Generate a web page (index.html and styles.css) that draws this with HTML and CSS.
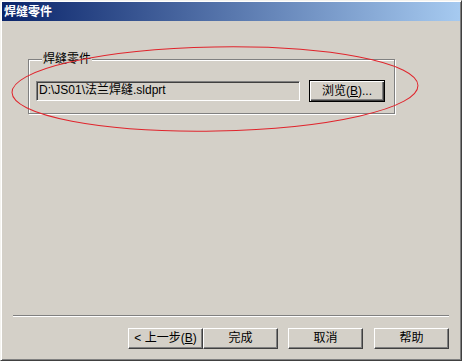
FILE: index.html
```html
<!DOCTYPE html>
<html lang="zh-CN">
<head>
<meta charset="utf-8">
<title>焊缝零件</title>
<link rel="stylesheet" href="styles.css">
</head>
<body>
<div class="window">
  <div class="titlebar"><span class="title">焊缝零件</span></div>
  <div class="content">
    <fieldset class="group">
      <legend class="legend">焊缝零件</legend>
      <div class="row">
        <div class="field">D:\JS01\法兰焊缝.sldprt</div>
        <button class="btn btn-default">浏览(<u>B</u>)...</button>
      </div>
    </fieldset>
  </div>
  <div class="footer">
    <div class="sep"></div>
    <div class="buttons">
      <div class="pair">
        <button class="btn">&lt; 上一步(<u>B</u>)</button>
        <button class="btn">完成</button>
      </div>
      <button class="btn">取消</button>
      <button class="btn btn-last">帮助</button>
    </div>
  </div>
  <svg class="annot" width="462" height="361" viewBox="0 0 462 361">
    <ellipse cx="215" cy="89" rx="203" ry="42" transform="rotate(-1 215 89)" fill="none" stroke="#e0242c" stroke-width="1"/>
  </svg>
</div>
</body>
</html>
```
FILE: styles.css
```css
* { box-sizing: border-box; }
html, body { margin: 0; padding: 0; background: #d4d0c8; }
body {
  font-family: "Liberation Sans", "Noto Sans CJK SC", sans-serif;
  font-size: 12px;
  color: #000;
}
.window {
  position: relative;
  width: 462px;
  height: 361px;
  background: #d4d0c8;
  border: 1px solid;
  border-color: #f4f3ef #404040 #404040 #f4f3ef;
  box-shadow: inset 1px 1px 0 #ffffff, inset -1px -1px 0 #808080;
  padding: 1px;
  display: flex;
  flex-direction: column;
}
.titlebar {
  height: 19px;
  background: linear-gradient(to right, #0a246a, #a6caf0);
  display: flex;
  align-items: center;
  padding-left: 2px;
}
.title {
  color: #fff;
  font-weight: bold;
  font-size: 12px;
  line-height: 14px;
  letter-spacing: 0;
}
.content {
  padding: 31px 65px 0 26px;
}
.group {
  margin: 0;
  padding: 14px 9px 11px 7px;
  border: 1px solid #808080;
  box-shadow: 1px 1px 0 #ffffff, inset 1px 1px 0 #ffffff;
  min-width: 0;
}
.legend {
  margin-left: 6px;
  padding: 0 1px;
  line-height: 14px;
  background: #d4d0c8;
}
.row {
  display: flex;
  align-items: center;
  gap: 9px;
}
.field {
  flex: 1;
  height: 20px;
  line-height: 16px;
  padding: 0 2px;
  background: #d4d0c8;
  border: 1px solid;
  border-color: #808080 #ffffff #ffffff #808080;
  box-shadow: inset 1px 1px 0 #404040, inset -1px -1px 0 #d4d0c8;
  white-space: nowrap;
  overflow: hidden;
}
.btn {
  font: inherit;
  color: #000;
  width: 75px;
  height: 21px;
  padding: 0;
  margin: 0;
  background: #d4d0c8;
  border: 1px solid;
  border-color: #ffffff #404040 #404040 #ffffff;
  box-shadow: inset -1px -1px 0 #808080;
  line-height: 17px;
  text-align: center;
}
.btn u { text-decoration: underline; }
.btn-default {
  width: 76px;
  height: 22px;
  border: 1px solid #000;
  box-shadow: inset 1px 1px 0 #ffffff, inset -1px -1px 0 #404040, inset -2px -2px 0 #808080;
}
.footer {
  margin-top: auto;
  padding: 0 11px 10px 11px;
}
.sep {
  height: 2px;
  border-top: 1px solid #808080;
  border-bottom: 1px solid #ffffff;
}
.buttons {
  margin-top: 11px;
  display: flex;
  justify-content: flex-end;
  gap: 10px;
}
.pair { display: flex; }
.btn-last { margin-left: 1px; }
.annot {
  position: absolute;
  left: -1px;
  top: -1px;
  pointer-events: none;
}
```
